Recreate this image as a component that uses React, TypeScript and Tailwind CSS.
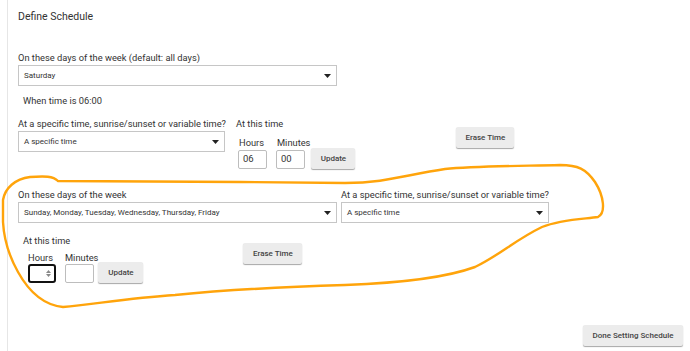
import React from "react";

function Caret() {
  return (
    <svg width="7" height="4" viewBox="0 0 7 4" className="shrink-0">
      <path d="M0 0 L7 0 L3.5 4 Z" fill="#222" />
    </svg>
  );
}

function Select({ text, w }: { text: string; w: string }) {
  return (
    <div
      className={`${w} h-[21px] border border-[#c6c6c6] bg-white flex items-center justify-between pl-[5px] pr-[5px] text-[8px] text-[#333]`}
    >
      <span>{text}</span>
      <Caret />
    </div>
  );
}

function Btn({ children, w }: { children: React.ReactNode; w: string }) {
  return (
    <div
      className={`${w} h-[21px] bg-[#ececec] rounded-[2px] shadow-[0_1px_1px_rgba(0,0,0,0.35)] flex items-center justify-center text-[8px] font-medium text-[#444]`}
    >
      {children}
    </div>
  );
}

function TimeInput({ value, w }: { value: string; w: string }) {
  return (
    <div
      className={`${w} h-[19px] border border-[#bdbdbd] rounded-[2px] bg-white flex items-center pl-[4px] text-[9.5px] text-[#333]`}
    >
      {value}
    </div>
  );
}

function FocusedInput() {
  return (
    <div className="w-[28px] h-[19px] border-2 border-[#111] rounded-[3px] bg-white flex items-center justify-end pr-[3px]">
      <div className="flex flex-col items-center gap-[1px]">
        <svg width="5" height="3" viewBox="0 0 5 3">
          <path d="M0 3 L5 3 L2.5 0 Z" fill="#888" />
        </svg>
        <svg width="5" height="3" viewBox="0 0 5 3">
          <path d="M0 0 L5 0 L2.5 3 Z" fill="#888" />
        </svg>
      </div>
    </div>
  );
}

export default function App() {
  return (
    <div className="w-[690px] h-[351px] bg-white relative overflow-hidden font-['Roboto',sans-serif] text-[#333]">
      <div className="ml-[7px] h-full border-l border-[#e6e6e6] pl-[10px] pt-[10px]">
        <div className="text-[10.5px] leading-[13px] text-[#333]">Define Schedule</div>

        <div className="mt-[29px] text-[9.3px] leading-[11px]">On these days of the week (default: all days)</div>
        <div className="mt-[2px]">
          <Select text="Saturday" w="w-[319px]" />
        </div>
        <div className="mt-[9px] ml-[5px] text-[9.3px] leading-[11px]">When time is 06:00</div>

        <div className="mt-[12px] flex items-start">
          <div className="flex flex-col">
            <div className="text-[9.3px] leading-[11px]">At a specific time, sunrise/sunset or variable time?</div>
            <div className="mt-[2px]">
              <Select text="A specific time" w="w-[207px]" />
            </div>
          </div>
          <div className="ml-[10px] flex flex-col">
            <div className="text-[9.3px] leading-[11px]">At this time</div>
            <div className="ml-[2px] mt-[8px] flex items-start">
              <div className="flex flex-col">
                <div className="text-[9.3px] leading-[11px] ml-[1px]">Hours</div>
                <div className="mt-[2px]">
                  <TimeInput value="06" w="w-[29px]" />
                </div>
              </div>
              <div className="ml-[9px] flex flex-col">
                <div className="text-[9.3px] leading-[11px] ml-[1px]">Minutes</div>
                <div className="mt-[2px]">
                  <TimeInput value="00" w="w-[29px]" />
                </div>
              </div>
              <div className="ml-[1px] mt-[11px]">
                <Btn w="w-[44px]">Update</Btn>
              </div>
            </div>
          </div>
          <div className="ml-[101px] mt-[9px]">
            <Btn w="w-[58px]">Erase Time</Btn>
          </div>
        </div>

        <div className="mt-[20px] flex items-start">
          <div className="flex flex-col">
            <div className="text-[9.3px] leading-[11px]">On these days of the week</div>
            <div className="mt-[2px]">
              <Select text="Sunday, Monday, Tuesday, Wednesday, Thursday, Friday" w="w-[319px]" />
            </div>
          </div>
          <div className="ml-[4px] flex flex-col">
            <div className="text-[9.3px] leading-[11px]">At a specific time, sunrise/sunset or variable time?</div>
            <div className="mt-[2px]">
              <Select text="A specific time" w="w-[208px]" />
            </div>
          </div>
        </div>

        <div className="mt-[12px] ml-[5px] flex items-start">
          <div className="flex flex-col">
            <div className="text-[9.3px] leading-[11px]">At this time</div>
            <div className="ml-[5px] mt-[6px] flex items-start">
              <div className="flex flex-col">
                <div className="text-[9.3px] leading-[11px]">Hours</div>
                <div className="mt-[1px]">
                  <FocusedInput />
                </div>
              </div>
              <div className="ml-[9px] flex flex-col">
                <div className="text-[9.3px] leading-[11px]">Minutes</div>
                <div className="mt-[1px]">
                  <TimeInput value="" w="w-[29px]" />
                </div>
              </div>
              <div className="ml-[0px] mt-[10px]">
                <Btn w="w-[45px]">Update</Btn>
              </div>
            </div>
          </div>
          <div className="ml-[100px] mt-[8px]">
            <Btn w="w-[59px]">Erase Time</Btn>
          </div>
        </div>

        <div className="mt-[42px] flex justify-end pr-[7px]">
          <Btn w="w-[100px]">Done Setting Schedule</Btn>
        </div>
      </div>

      <svg
        className="absolute left-0 top-0 pointer-events-none"
        width="690"
        height="351"
        viewBox="0 0 690 351"
      >
        <path
          d="M 58 181 C 53 176, 45 176, 30 177 C 15 179, 5 188, 3 200 L 3 222 C 4 240, 9 256, 18 272 C 28 290, 43 305, 63 307 C 95 304, 130 298, 175 295 C 225 290, 280 287, 345 285 C 400 283, 445 278, 475 267 C 500 255, 515 240, 542 227 C 562 219, 585 219, 598 217 C 606 213, 604 196, 595 182 C 586 169, 578 165, 560 165 C 520 166, 475 166, 445 169 C 405 175, 385 183, 345 183 C 250 182, 120 181, 58 181"
          fill="none"
          stroke="#FFA40B"
          strokeWidth="2.4"
          strokeLinecap="round"
          strokeLinejoin="round"
        />
      </svg>
    </div>
  );
}
